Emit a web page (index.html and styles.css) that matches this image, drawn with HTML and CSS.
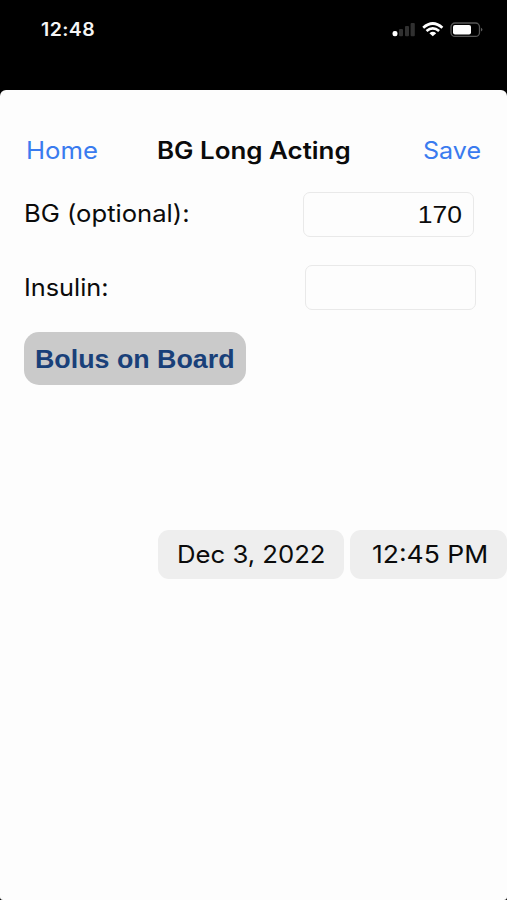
FILE: index.html
```
<!DOCTYPE html>
<html lang="en">
<head>
<meta charset="utf-8">
<title>BG Long Acting</title>
<link rel="stylesheet" href="styles.css">
</head>
<body>
<div class="phone">
  <header class="status">
    <span class="clock">12:48</span>
    <svg class="indicators" width="92" height="18" viewBox="0 0 92 18" aria-hidden="true">
      <rect x="0.5" y="9" width="5" height="5.2" rx="2.2" fill="#fff"/>
      <g fill="#303030">
        <rect x="7" y="7" width="4" height="7.2" rx="1"/>
        <rect x="13" y="4" width="4" height="10.2" rx="1"/>
        <rect x="18.600" y="1" width="4.200" height="13.200" rx="1"/>
      </g>
      <g fill="none" stroke="#fff" stroke-width="2.700">
        <path d="M31.200 5.700Q40.800-2.700 50.400 5.700"/>
        <path d="M34.500 9Q40.800 3.700 47.100 9"/>
      </g>
      <path d="M37.400 11.200Q40.800 8.500 44.200 11.200L40.800 14.200Z" fill="#fff"/>
      <rect x="59" y="1" width="28.500" height="13.400" rx="4" fill="none" stroke="#555" stroke-width="1.300"/>
      <rect x="61" y="3" width="18" height="9.400" rx="2" fill="#fff"/>
      <path d="M89.200 5.800Q91.600 7.700 89.200 9.600Z" fill="#777"/>
    </svg>
  </header>
  <main class="sheet">
    <nav class="nav">
      <a class="link home">Home</a>
      <h1 class="title">BG Long Acting</h1>
      <a class="link save">Save</a>
    </nav>
    <div class="row bg-row">
      <span class="label bg-label">BG (optional):</span>
      <div class="field"><span class="value">170</span></div>
    </div>
    <div class="row insulin-row">
      <span class="label insulin-label">Insulin:</span>
      <div class="field"></div>
    </div>
    <button class="bolus"><span class="bolus-text">Bolus on Board</span></button>
    <div class="picker">
      <div class="pill date"><span class="date-text">Dec 3, 2022</span></div>
      <div class="pill time"><span class="time-text">12:45 PM</span></div>
    </div>
  </main>
</div>
</body>
</html>
```
FILE: styles.css
```
* { box-sizing: border-box; }
body {
  margin: 0;
  background: #000;
  color: #0b0b0b;
  font-family: Inter, "Liberation Sans", sans-serif;
  font-size: 24px;
}
.phone { width: 507px; height: 900px; overflow: hidden; display: flex; flex-direction: column; }
.status {
  height: 90px;
  flex: none;
  display: flex;
  justify-content: space-between;
  align-items: flex-start;
  padding: 19px 23px 0 41px;
  color: #f5f5f5;
}
.clock { font-size: 18px; line-height: 22px; font-weight: 600; letter-spacing: 0.4px; transform: scaleX(1.08); transform-origin: left; }
.indicators { display: block; margin-top: 3px; }
.sheet { flex: 1; background: #fdfdfd; border-radius: 6px 6px 3px 3px; padding-top: 43px; white-space: nowrap; }
.nav { display: grid; grid-template-columns: 157px 1fr 84px; height: 34px; line-height: 35px; }
.link { color: #3a7bef; }
.home, .save, .title, .label, .bolus-text, .date-text, .time-text { display: block; transform-origin: left; letter-spacing: 0; }
.home { margin-left: 25.500px; transform: scaleX(1.07); }
.save { transform: scaleX(1.045); }
.title { margin: 0; font-size: 24px; font-weight: 600; transform: scaleX(1.08); }
.row { display: flex; justify-content: space-between; height: 45px; line-height: 44px; padding-left: 24px; }
.bg-row { margin-top: 25px; padding-right: 33px; }
.bg-label { transform: scaleX(1.067); }
.insulin-row { margin-top: 28px; padding-right: 31px; }
.insulin-label { line-height: 46px; transform: scaleX(1.055); }
.field {
  width: 171px;
  height: 45px;
  border: 1px solid #e9e9e9;
  border-radius: 7px;
  padding-right: 11px;
  text-align: right;
  font-family: "Liberation Sans", sans-serif;
  font-size: 24.5px;
}
.value { display: inline-block; transform: scaleX(1.08); transform-origin: right; }
.bolus {
  display: block;
  width: 222px;
  height: 53px;
  margin: 22px 0 0 24px;
  padding: 0 0 0 11px;
  border: 0;
  border-radius: 15px;
  background: #cacaca;
  color: #194079;
  text-align: left;
  font: 700 25px/55px "Liberation Sans", sans-serif;
}
.bolus-text { transform: scaleX(1.072); }
.picker { display: flex; gap: 6px; margin: 145px 0 0 158px; }
.pill { height: 49px; line-height: 49px; border-radius: 11px; background: #eee; }
.date { width: 186px; padding-left: 18.500px; }
.date-text { transform: scaleX(1.07); }
.time { width: 157px; padding-left: 21.500px; }
.time-text { transform: scaleX(1.105); }
```
